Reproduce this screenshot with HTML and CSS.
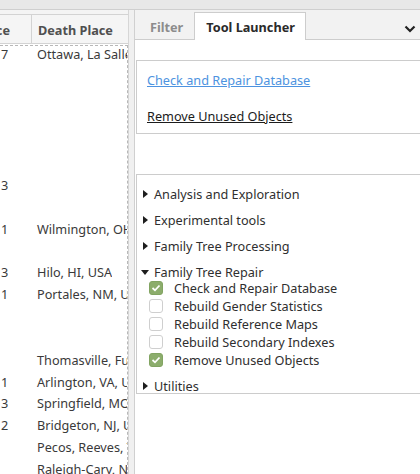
FILE: index.html
```html
<!DOCTYPE html>
<html>
<head>
<meta charset="utf-8">
<link rel="stylesheet" href="styles.css">
</head>
<body>
<div class="topstrip"></div>
<div class="main">
  <div class="left">
    <div class="thead">
      <div class="th th1"><span>Place</span></div>
      <div class="th th2">Death Place</div>
    </div>
    <div class="tbody">
      <div class="tr"><span class="c1">7</span><span class="c2">Ottawa, La Salle, IL, USA</span></div>
      <div class="tr"></div>
      <div class="tr"></div>
      <div class="tr"></div>
      <div class="tr"></div>
      <div class="tr"></div>
      <div class="tr"><span class="c1">3</span><span class="c2"></span></div>
      <div class="tr"></div>
      <div class="tr"><span class="c1">1</span><span class="c2">Wilmington, OH, USA</span></div>
      <div class="tr"></div>
      <div class="tr"><span class="c1">3</span><span class="c2">Hilo, HI, USA</span></div>
      <div class="tr"><span class="c1">1</span><span class="c2">Portales, NM, USA</span></div>
      <div class="tr"></div>
      <div class="tr"></div>
      <div class="tr"><span class="c1"></span><span class="c2">Thomasville, Fulton, GA</span></div>
      <div class="tr"><span class="c1">1</span><span class="c2">Arlington, VA, USA</span></div>
      <div class="tr"><span class="c1">3</span><span class="c2">Springfield, MO, USA</span></div>
      <div class="tr"><span class="c1">2</span><span class="c2">Bridgeton, NJ, USA</span></div>
      <div class="tr"><span class="c1"></span><span class="c2">Pecos, Reeves, TX, USA</span></div>
      <div class="tr"><span class="c1"></span><span class="c2">Raleigh-Cary, NC, USA</span></div>
    </div>
  </div>
  <div class="handle"></div>
  <div class="right">
    <div class="tabbar">
      <div class="tab">Filter</div>
      <div class="tab active">Tool Launcher</div>
      <div class="chev">
        <svg width="12" height="8" viewBox="0 0 12 8"><path d="M1.5 1.5 L6 6 L10.5 1.5" fill="none" stroke="#222" stroke-width="2.2"/></svg>
      </div>
    </div>
    <div class="content">
      <div class="box links">
        <a class="link blue">Check and Repair Database</a>
        <a class="link dark">Remove Unused Objects</a>
      </div>
      <div class="box tree">
        <div class="row"><span class="exp closed"></span>Analysis and Exploration</div>
        <div class="row group"><span class="exp closed"></span>Experimental tools</div>
        <div class="row group"><span class="exp closed"></span>Family Tree Processing</div>
        <div class="row group"><span class="exp open"></span>Family Tree Repair</div>
        <div class="children">
          <div class="row child"><span class="cb on"><svg width="10" height="8" viewBox="0 0 10 8"><path d="M1.5 4 L4 6.3 L8.5 1.5" fill="none" stroke="#fff" stroke-width="1.8"/></svg></span>Check and Repair Database</div>
          <div class="row child"><span class="cb"></span>Rebuild Gender Statistics</div>
          <div class="row child"><span class="cb"></span>Rebuild Reference Maps</div>
          <div class="row child"><span class="cb"></span>Rebuild Secondary Indexes</div>
          <div class="row child"><span class="cb on"><svg width="10" height="8" viewBox="0 0 10 8"><path d="M1.5 4 L4 6.3 L8.5 1.5" fill="none" stroke="#fff" stroke-width="1.8"/></svg></span>Remove Unused Objects</div>
        </div>
        <div class="row group last"><span class="exp closed"></span>Utilities</div>
      </div>
    </div>
  </div>
</div>
</body>
</html>
```

FILE: styles.css
```css
* { box-sizing: border-box; }
html, body { margin: 0; padding: 0; }
body {
  width: 420px;
  height: 474px;
  overflow: hidden;
  background: #fff;
  font-family: "Noto Sans", "Open Sans", sans-serif;
  font-size: 12.7px;
  color: #3a3a3a;
}
.topstrip {
  height: 10px;
  background: #e8e8e8;
  border-bottom: 1px solid #cfcfcf;
}
.main {
  display: flex;
  height: 464px;
}
.left {
  width: 129px;
  flex: none;
  border-right: 1px solid #d6d6d6;
  overflow: hidden;
  padding-top: 4px;
  background: linear-gradient(#f4f4f4, #f4f4f4) top/100% 5px no-repeat, #fff;
}
.thead {
  display: flex;
  height: 30px;
  background: #f5f5f5;
  border-top: 1px solid #d3d3d3;
  border-bottom: 1px solid #d3d3d3;
}
.th {
  display: flex;
  align-items: center;
  font-weight: bold;
  color: #505050;
  white-space: nowrap;
  overflow: hidden;
  padding-top: 1px;
}
.th1 {
  width: 32px;
  justify-content: flex-end;
  padding-right: 21px;
  border-right: 1px solid #d3d3d3;
}
.th2 {
  flex: 1;
  padding-left: 6px;
}
.tbody {
  margin-top: 1px;
  border-top: 1px dashed #b8b8b8;
  border-right: 1px dashed #b8b8b8;
  width: 128px;
  height: 430px;
  overflow: hidden;
}
.tr {
  display: flex;
  height: 21.85px;
  align-items: center;
  white-space: nowrap;
}
.tr:first-child { margin-top: -3px; }
.c1 {
  width: 32px;
  flex: none;
  padding-left: 1px;
}
.c2 {
  padding-left: 5px;
  overflow: hidden;
}
.handle {
  width: 6px;
  flex: none;
  background: #f0f0f0;
  border-right: 1px solid #d0d0d0;
}
.right {
  flex: 1;
  display: flex;
  flex-direction: column;
  min-width: 0;
}
.tabbar {
  height: 30px;
  background: #f2f2f2;
  border-bottom: 1px solid #cdcdcd;
  display: flex;
  align-items: flex-end;
  padding-left: 4px;
  position: relative;
}
.tab {
  height: 27px;
  padding: 2px 10px 0;
  display: flex;
  align-items: center;
  font-weight: bold;
  color: #8c8c8c;
  white-space: nowrap;
  border: 1px solid transparent;
  border-bottom: none;
}
.tab.active {
  color: #2a2a2a;
  background: #fff;
  border-color: #cdcdcd;
  margin-bottom: -1px;
  height: 28px;
  padding: 2px 10px 1px 11px;
}
.chev {
  position: absolute;
  right: 4px;
  top: 9px;
}
.content {
  flex: 1;
  background: #fff;
  padding-top: 20px;
  padding-left: 1px;
}
.box {
  border: 1px solid #cccccc;
  border-right: none;
}
.links {
  padding: 10px 0 8px 10px;
  display: flex;
  flex-direction: column;
  align-items: flex-start;
  gap: 18px;
  height: 74px;
}
.link {
  line-height: 18px;
  text-decoration: underline;
  cursor: pointer;
}
.link.blue { color: #4d93e0; }
.link.dark { color: #1c1c1c; }
.tree {
  margin-top: 40px;
  padding: 10px 0 0 0;
  height: 220px;
}
.row {
  height: 18px;
  display: flex;
  align-items: center;
  white-space: nowrap;
  color: #2f2f2f;
}
.row.group { margin-top: 8px; }
.exp {
  width: 17px;
  height: 18px;
  flex: none;
  position: relative;
}
.exp.closed::before {
  content: "";
  position: absolute;
  left: 6px;
  top: 5px;
  border-left: 5px solid #1e1e1e;
  border-top: 4px solid transparent;
  border-bottom: 4px solid transparent;
}
.exp.open::before {
  content: "";
  position: absolute;
  left: 4px;
  top: 7px;
  border-top: 5px solid #1e1e1e;
  border-left: 4px solid transparent;
  border-right: 4px solid transparent;
}
.children { margin-top: -2px; }
.row.child { padding-left: 12px; }
.cb {
  width: 14px;
  height: 14px;
  flex: none;
  border: 1px solid #cfcfcf;
  border-radius: 3px;
  background: #fff;
  margin-right: 11px;
  display: flex;
  align-items: center;
  justify-content: center;
}
.cb.on {
  background: #8cad6c;
  border-color: #82a462;
}
```
